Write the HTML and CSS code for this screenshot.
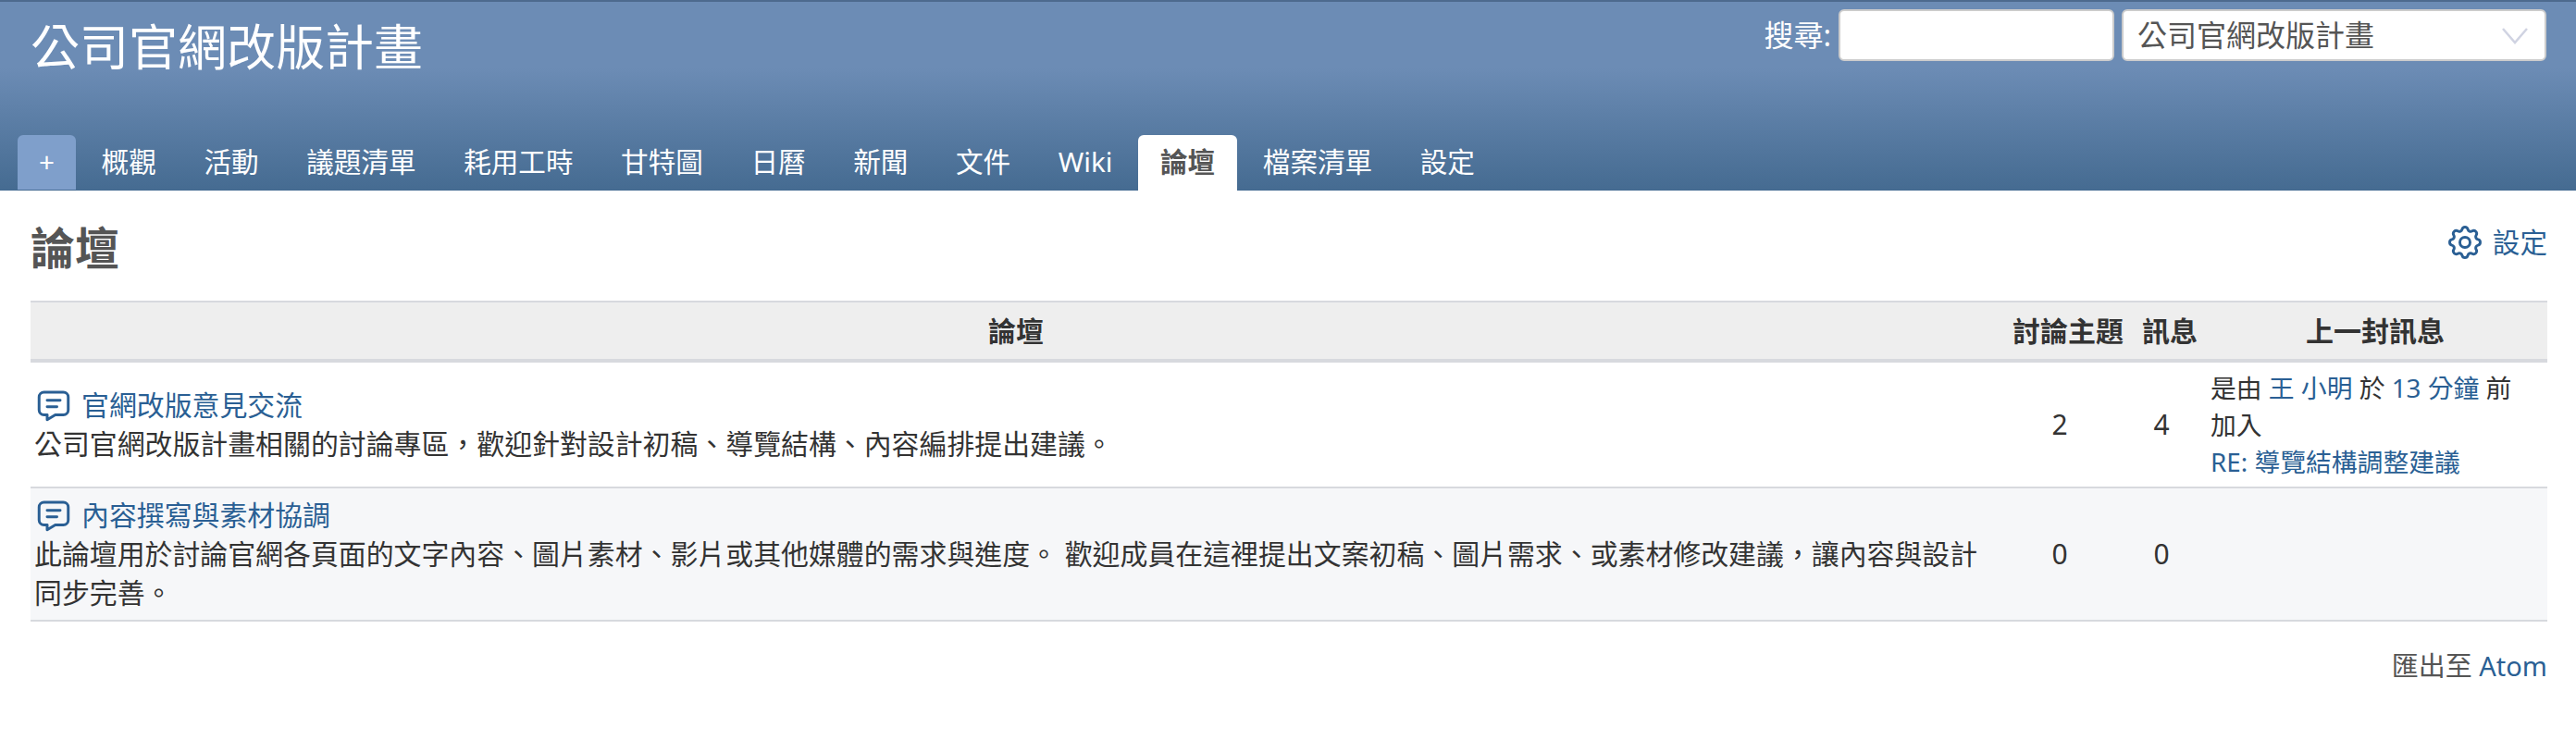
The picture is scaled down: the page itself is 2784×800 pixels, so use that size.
FILE: index.html
```html
<!DOCTYPE html>
<html lang="zh-Hant">
<head>
<meta charset="utf-8">
<title>論壇</title>
<link rel="stylesheet" href="styles.css">
</head>
<body>
<header class="header">
  <div class="top">
    <h1 class="title">公司官網改版計畫</h1>
    <form class="search">
      <label class="search-label">搜尋:</label>
      <input class="search-input" type="text">
      <div class="jump">公司官網改版計畫
        <svg class="chev" viewBox="0 0 28 18"><path d="M1 1l13 15L27 1"/></svg>
      </div>
    </form>
  </div>
  <nav class="tabs">
    <a class="tab tab-new">+</a>
    <a class="tab">概觀</a>
    <a class="tab">活動</a>
    <a class="tab">議題清單</a>
    <a class="tab">耗用工時</a>
    <a class="tab">甘特圖</a>
    <a class="tab">日曆</a>
    <a class="tab">新聞</a>
    <a class="tab">文件</a>
    <a class="tab">Wiki</a>
    <a class="tab active">論壇</a>
    <a class="tab">檔案清單</a>
    <a class="tab">設定</a>
  </nav>
</header>
<main class="content">
  <div class="page-head">
    <h2 class="page-title">論壇</h2>
    <a class="settings">
      <svg class="gear" viewBox="0 0 24 24"><path d="M10.325 4.317c.426 -1.756 2.924 -1.756 3.35 0a1.724 1.724 0 0 0 2.573 1.066c1.543 -.94 3.31 .826 2.37 2.37a1.724 1.724 0 0 0 1.065 2.572c1.756 .426 1.756 2.924 0 3.35a1.724 1.724 0 0 0 -1.066 2.573c.94 1.543 -.826 3.31 -2.37 2.37a1.724 1.724 0 0 0 -2.572 1.065c-.426 1.756 -2.924 1.756 -3.35 0a1.724 1.724 0 0 0 -2.573 -1.066c-1.543 .94 -3.31 -.826 -2.37 -2.37a1.724 1.724 0 0 0 -1.065 -2.572c-1.756 -.426 -1.756 -2.924 0 -3.35a1.724 1.724 0 0 0 1.066 -2.573c-.94 -1.543 .826 -3.31 2.37 -2.37c1 .608 2.296 .07 2.572 -1.065z"/><circle cx="12" cy="12" r="3"/></svg>
      <span>設定</span>
    </a>
  </div>
  <table class="boards">
    <thead>
      <tr>
        <th class="c-name">論壇</th>
        <th class="c-topics">討論主題</th>
        <th class="c-msgs">訊息</th>
        <th class="c-last">上一封訊息</th>
      </tr>
    </thead>
    <tbody>
      <tr>
        <td class="name">
          <a class="board-link"><svg class="msg" viewBox="0 0 24 24"><path d="M8 9h8M8 13h6"/><path d="M18 4a3 3 0 0 1 3 3v8a3 3 0 0 1 -3 3h-5l-5 3v-3h-2a3 3 0 0 1 -3 -3v-8a3 3 0 0 1 3 -3h12z"/></svg><span>官網改版意見交流</span></a>
          <div class="desc">公司官網改版計畫相關的討論專區，歡迎針對設計初稿、導覽結構、內容編排提出建議。</div>
        </td>
        <td class="num">2</td>
        <td class="num">4</td>
        <td class="last">是由 <a>王 小明</a> 於 <a>13 分鐘</a> 前加入<br><a>RE: 導覽結構調整建議</a></td>
      </tr>
      <tr class="even">
        <td class="name">
          <a class="board-link"><svg class="msg" viewBox="0 0 24 24"><path d="M8 9h8M8 13h6"/><path d="M18 4a3 3 0 0 1 3 3v8a3 3 0 0 1 -3 3h-5l-5 3v-3h-2a3 3 0 0 1 -3 -3v-8a3 3 0 0 1 3 -3h12z"/></svg><span>內容撰寫與素材協調</span></a>
          <div class="desc">此論壇用於討論官網各頁面的文字內容、圖片素材、影片或其他媒體的需求與進度。 歡迎成員在這裡提出文案初稿、圖片需求、或素材修改建議，讓內容與設計同步完善。</div>
        </td>
        <td class="num">0</td>
        <td class="num">0</td>
        <td class="last"></td>
      </tr>
    </tbody>
  </table>
  <p class="other">匯出至 <a>Atom</a></p>
</main>
</body>
</html>
```

FILE: styles.css
```css
* { box-sizing: border-box; }
html, body { margin: 0; padding: 0; }
body {
  background: #fff;
  color: #333;
  font-family: "Noto Sans", "Noto Sans CJK TC", sans-serif;
  font-size: 30px;
  line-height: 40px;
}
a { color: #2a5f94; text-decoration: none; }

.header {
  height: 206px;
  border-top: 2px solid #4d6a8e;
  background: linear-gradient(to bottom, #6c8cb5 0, #6c8cb5 35%, #456b91 100%);
  display: flex;
  flex-direction: column;
  justify-content: space-between;
  color: #fff;
}
.top { display: flex; justify-content: space-between; align-items: flex-start; padding: 8px 32px 0 33px; }
.title { margin: 9px 0 0; font-size: 53px; line-height: 64px; font-weight: 400; }
.search { display: flex; align-items: center; }
.search-label { font-size: 32px; margin-right: 8px; }
.search-input {
  width: 298px; height: 56px; margin: 0 8px 0 0; padding: 0;
  border: 2px solid #ccc; border-radius: 6px; background: #fff;
}
.jump {
  position: relative;
  width: 459px; height: 56px; padding: 6px 15px;
  border: 2px solid #ccc; border-radius: 6px; background: #fff;
  color: #555; font-size: 32px;
}
.chev { position: absolute; right: 18px; top: 18px; width: 28px; height: 18px; fill: none; stroke: #d0d3e2; stroke-width: 2.5; }

.tabs { display: flex; gap: 3.6px; padding-left: 19px; }
.tab {
  height: 60px; padding: 7px 24px 0; color: #fff; font-size: 29.6px; line-height: 44px;
  border-radius: 6px 6px 0 0;
}
.tab-new { width: 63px; height: 59px; padding: 7px 0 0; text-align: center; background: #7f9fcb; margin-bottom: 1px; }
.tab.active { background: #fff; color: #555; font-weight: 700; }

.content { padding: 0 31px 0 33px; }
.page-head { display: flex; justify-content: space-between; align-items: flex-start; height: 119px; }
.page-title { margin: 30px 0 0; font-size: 48px; line-height: 64px; color: #555; font-weight: 700; }
.settings { display: flex; align-items: center; margin-top: 34px; font-size: 29.6px; }
.gear { width: 44px; height: 44px; margin-right: 8px; fill: none; stroke: #2a5f94; stroke-width: 1.6; stroke-linecap: round; stroke-linejoin: round; }

.boards { width: 100%; border-collapse: separate; border-spacing: 0; table-layout: fixed; }
.boards th {
  height: 67px; padding: 0; background: #eee; font-weight: 700; color: #333;
  border-top: 2px solid #d7d9de; border-bottom: 4px solid #d7d9de; text-align: center;
}
.boards th.c-name { padding-left: 2px; }
.c-topics { width: 148px; }
.c-msgs { width: 72px; }
.c-last { width: 372px; }
.boards td { border-bottom: 2px solid #d7d9de; padding: 8px 4px; vertical-align: middle; }
.even td { background: #f6f7f9; }
.name { line-height: 42px; font-size: 29.9px; }
.board-link { display: flex; align-items: center; }
.msg { width: 42px; height: 42px; margin-right: 9px; fill: none; stroke: #2a5f94; stroke-width: 1.7; stroke-linecap: round; stroke-linejoin: round; }
.boards td.num { text-align: center; padding: 0 18px 0 0; }
.boards td.last { padding: 7px 30px 7px 8px; font-size: 27.8px; }
.other { margin: 28px 0 0; text-align: right; color: #555; font-size: 29px; }
```
